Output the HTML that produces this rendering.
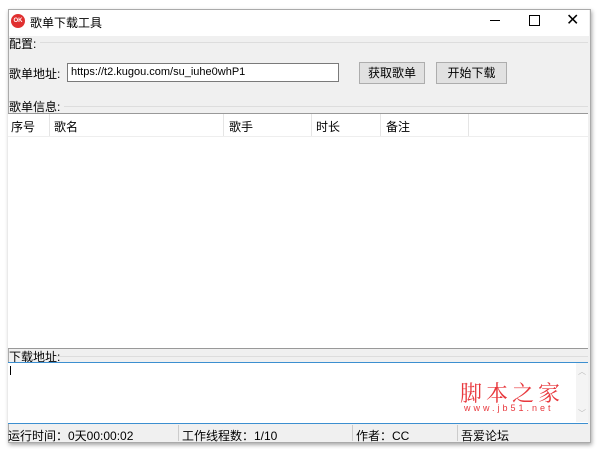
<!DOCTYPE html><html><head><meta charset="utf-8"><style>
body{margin:0;width:600px;height:449px;background:#fff;position:relative;overflow:hidden;font-family:"Liberation Sans","Noto Sans CJK SC",sans-serif;font-size:12px;color:#000}
.a{position:absolute}
.win{left:8px;top:9px;width:581px;height:432px;background:#f0f0f0;border:1px solid #aaa;box-shadow:1px 2px 4px rgba(0,0,0,.35)}
</style></head><body>
<div class="a win"></div>
<div class="a" style="left:9px;top:10px;width:580px;height:26px;background:#fff"></div>
<div class="a" style="left:11px;top:14px;width:14px;height:14px;border-radius:50%;background:#e03030;color:#fff;font-size:6px;line-height:14px;text-align:center;font-weight:bold">OK</div>
<div class="a" style="left:30px;top:14px">歌单下载工具</div>
<div class="a" style="left:490px;top:20px;width:10px;height:1px;background:#000"></div>
<div class="a" style="left:529px;top:15px;width:9px;height:9px;border:1px solid #000"></div>
<div class="a" style="left:566px;top:10px;font-size:16px">✕</div>
<div class="a" style="left:9px;top:35px">配置:</div>
<div class="a" style="left:40px;top:42px;width:548px;border-top:1px solid #ddd"></div>
<div class="a" style="left:9px;top:65px">歌单地址:</div>
<div class="a" style="left:67px;top:63px;width:270px;height:17px;background:#fff;border:1px solid #7a7a7a;line-height:17px;padding-left:3px;box-sizing:border-box;width:272px;height:19px;font-size:11px">https://t2.kugou.com/su_iuhe0whP1</div>
<div class="a" style="left:359px;top:62px;width:64px;height:20px;background:#e1e1e1;border:1px solid #adadad;text-align:center;line-height:20px">获取歌单</div>
<div class="a" style="left:436px;top:62px;width:69px;height:20px;background:#e1e1e1;border:1px solid #adadad;text-align:center;line-height:20px">开始下载</div>
<div class="a" style="left:9px;top:98px">歌单信息:</div>
<div class="a" style="left:64px;top:106px;width:524px;border-top:1px solid #ddd"></div>
<div class="a" style="left:8px;top:113px;width:580px;height:234px;background:#fff;border-top:1px solid #999;border-bottom:1px solid #999"></div>
<div class="a" style="left:8px;top:136px;width:580px;border-top:1px solid #eee"></div>
<div class="a" style="left:11px;top:118px">序号</div>
<div class="a" style="left:54px;top:118px">歌名</div>
<div class="a" style="left:229px;top:118px">歌手</div>
<div class="a" style="left:316px;top:118px">时长</div>
<div class="a" style="left:386px;top:118px">备注</div>
<div class="a" style="left:49px;top:114px;height:22px;border-left:1px solid #e5e5e5"></div>
<div class="a" style="left:223px;top:114px;height:22px;border-left:1px solid #e5e5e5"></div>
<div class="a" style="left:311px;top:114px;height:22px;border-left:1px solid #e5e5e5"></div>
<div class="a" style="left:380px;top:114px;height:22px;border-left:1px solid #e5e5e5"></div>
<div class="a" style="left:468px;top:114px;height:22px;border-left:1px solid #e5e5e5"></div>
<div class="a" style="left:9px;top:348px">下载地址:</div>
<div class="a" style="left:56px;top:356px;width:532px;border-top:1px solid #ddd"></div>
<div class="a" style="left:8px;top:362px;width:580px;height:60px;background:#fff;border-top:1px solid #3c8fd0;border-bottom:1px solid #3c8fd0"></div>
<div class="a" style="left:10px;top:366px;width:1px;height:9px;background:#000"></div>
<div class="a" style="left:576px;top:363px;width:12px;height:59px;background:#f4f4f4"></div>
<div class="a" style="left:578px;top:366px;color:#bbb;font-size:8px">︿</div>
<div class="a" style="left:578px;top:408px;color:#bbb;font-size:8px">﹀</div>
<div class="a" style="left:460px;top:377px;color:#e8383d;font-size:22px;letter-spacing:4px;font-family:'Noto Serif CJK SC',serif">脚本之家</div>
<div class="a" style="left:464px;top:403px;color:#e8383d;font-size:9px;letter-spacing:3px">www.jb51.net</div>
<div class="a" style="left:8px;top:427px">运行时间：0天00:00:02</div>
<div class="a" style="left:182px;top:427px">工作线程数：1/10</div>
<div class="a" style="left:356px;top:427px">作者：CC</div>
<div class="a" style="left:461px;top:427px">吾爱论坛</div>
<div class="a" style="left:178px;top:425px;height:16px;border-left:1px solid #ccc"></div>
<div class="a" style="left:352px;top:425px;height:16px;border-left:1px solid #ccc"></div>
<div class="a" style="left:457px;top:425px;height:16px;border-left:1px solid #ccc"></div>
</body></html>
